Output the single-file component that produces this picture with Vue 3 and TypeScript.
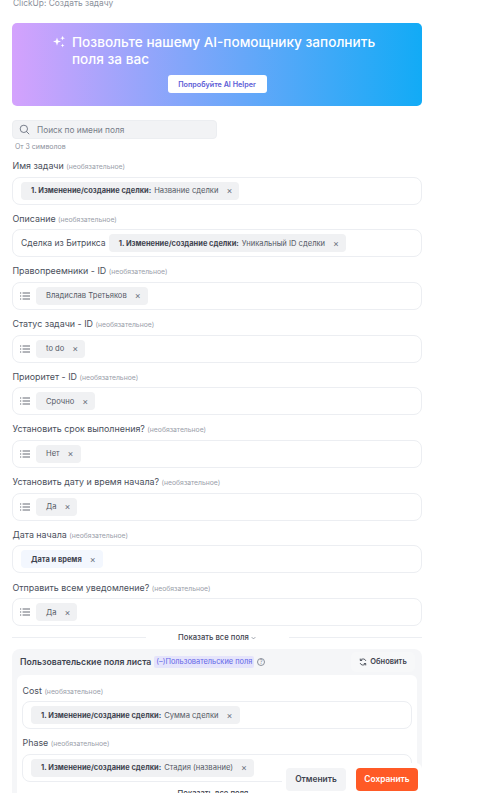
<script setup lang="ts">
interface Chip {
  bold?: string;
  text?: string;
  tone?: string;
}

interface Field {
  label: string;
  list?: boolean;
  prefix?: string;
  chip: Chip;
}

const mainFields: Field[] = [
  { label: "Имя задачи", chip: { bold: "1. Изменение/создание сделки:", text: "Название сделки" } },
  {
    label: "Описание",
    prefix: "Сделка из Битрикса",
    chip: { bold: "1. Изменение/создание сделки:", text: "Уникальный ID сделки" },
  },
  { label: "Правопреемники - ID", list: true, chip: { text: "Владислав Третьяков" } },
  { label: "Статус задачи - ID", list: true, chip: { text: "to do" } },
  { label: "Приоритет - ID", list: true, chip: { text: "Срочно" } },
  { label: "Установить срок выполнения?", list: true, chip: { text: "Нет" } },
  { label: "Установить дату и время начала?", list: true, chip: { text: "Да" } },
  { label: "Дата начала", chip: { bold: "Дата и время", tone: "blue" } },
  { label: "Отправить всем уведомление?", list: true, chip: { text: "Да" } },
];

const customFields: Field[] = [
  { label: "Cost", chip: { bold: "1. Изменение/создание сделки:", text: "Сумма сделки" } },
  { label: "Phase", chip: { bold: "1. Изменение/создание сделки:", text: "Стадия (название)" } },
];
</script>

<template>
  <div class="page">
    <div class="crumb">ClickUp: Создать задачу</div>

    <div class="banner">
      <div class="banner__head">
        <svg class="banner__icon" viewBox="0 0 14 14" width="14" height="14" fill="#fff">
          <path d="M5 2.5 6 5.6 9 6.6 6 7.6 5 10.7 4 7.6 1 6.6 4 5.6Z" />
          <path d="M10.6 0.8 11.2 2.6 13 3.2 11.2 3.8 10.6 5.6 10 3.8 8.2 3.2 10 2.6Z" />
          <path d="M10.6 8.6 11.1 10 12.5 10.5 11.1 11 10.6 12.4 10.1 11 8.7 10.5 10.1 10Z" />
        </svg>
        <div class="banner__title">Позвольте нашему AI-помощнику заполнить поля за вас</div>
      </div>
      <button type="button" class="banner__btn">Попробуйте AI Helper</button>
    </div>

    <div class="search">
      <svg viewBox="0 0 12 12" width="11" height="11" fill="none" stroke="#6b7280" stroke-width="1">
        <circle cx="5.3" cy="5.3" r="4" />
        <path d="M8.2 8.2 10.8 10.8" stroke-linecap="round" />
      </svg>
      <span>Поиск по имени поля</span>
    </div>
    <div class="hint">От 3 символов</div>

    <div class="fields">
      <div v-for="field in mainFields" :key="field.label" class="field">
        <div class="field__label">
          {{ field.label }} <small>(необязательное)</small>
        </div>
        <div class="field__box">
          <svg v-if="field.list" class="field__list" viewBox="0 0 10 8" width="10" height="8" stroke="#3f4450" stroke-width="0.8">
            <path d="M0 1H1.2M0 4H1.2M0 7H1.2M2.6 1H10M2.6 4H10M2.6 7H10" />
          </svg>
          <span v-if="field.prefix" class="field__prefix">{{ field.prefix }}</span>
          <span class="chip" :class="{ 'chip--blue': field.chip.tone == 'blue' }">
            <b v-if="field.chip.bold">{{ field.chip.bold }}</b>
            <span v-if="field.chip.text">{{ field.chip.text }}</span>
            <i>×</i>
          </span>
        </div>
      </div>
    </div>

    <div class="more">
      <span class="more__line"></span>
      <span class="more__text">
        Показать все поля
        <svg viewBox="0 0 8 5" width="5" height="4" fill="none" stroke="#6b7280" stroke-width="1">
          <path d="M1 1 4 4 7 1" />
        </svg>
      </span>
      <span class="more__line"></span>
    </div>

    <div class="panel">
      <div class="panel__head">
        <span class="panel__title">Пользовательские поля листа</span>
        <span class="tag">(–)Пользовательские поля</span>
        <span class="help">?</span>
        <button type="button" class="refresh">
          <svg viewBox="0 0 10 10" width="8" height="8" fill="none" stroke="#3f4450" stroke-width="1.1">
            <path d="M8.6 3.6A3.8 3.8 0 0 0 1.8 3M1.4 6.4A3.8 3.8 0 0 0 8.2 7" />
            <path d="M1.6 0.8V3.1H3.9M8.4 9.2V6.9H6.1" />
          </svg>
          Обновить
        </button>
      </div>
      <div class="panel__body">
        <div v-for="field in customFields" :key="field.label" class="field">
          <div class="field__label">
            {{ field.label }} <small>(необязательное)</small>
          </div>
          <div class="field__box">
            <span class="chip">
              <b>{{ field.chip.bold }}</b>
              <span>{{ field.chip.text }}</span>
              <i>×</i>
            </span>
          </div>
        </div>
        <div class="panel__more">Показать все поля</div>
      </div>
    </div>

    <div class="actions">
      <button type="button" class="actions__cancel">Отменить</button>
      <button type="button" class="actions__save">Сохранить</button>
    </div>
  </div>
</template>

<style>
html,
body {
  margin: 0;
  background: #fff;
  overflow: hidden;
}
</style>

<style scoped>
.page {
  position: relative;
  box-sizing: border-box;
  width: 485px;
  height: 793px;
  overflow: hidden;
  padding: 0 63px 0 12px;
  font-family: Inter, "Noto Sans", sans-serif;
  color: #3f4450;
}

.crumb {
  margin-top: -3px;
  padding-left: 1px;
  height: 12px;
  font-size: 8.4px;
  line-height: 12px;
  color: #8b919c;
}

.banner {
  box-sizing: border-box;
  height: 83px;
  margin-top: 14px;
  padding-top: 11px;
  border-radius: 5px;
  background: linear-gradient(90deg, #d4a2fd 0%, #12abf6 100%);
  display: flex;
  flex-direction: column;
  align-items: center;
}

.banner__head {
  display: flex;
  align-items: flex-start;
  gap: 6px;
  width: 330px;
}

.banner__icon {
  flex: none;
  margin-top: 1px;
}

.banner__title {
  font-size: 13.6px;
  line-height: 17px;
  font-weight: 500;
  color: #fff;
}

.banner__btn {
  margin-top: 7px;
  width: 99px;
  height: 18px;
  padding: 0;
  border: 0;
  border-radius: 3px;
  background: #fff;
  color: #5b5bd6;
  font-family: inherit;
  font-size: 7.2px;
  font-weight: 600;
}

.search {
  box-sizing: border-box;
  width: 205px;
  height: 19px;
  margin-top: 14px;
  padding-left: 6px;
  display: flex;
  align-items: center;
  gap: 7px;
  border: 1px solid #eceef1;
  border-radius: 4px;
  background: #f2f3f5;
  font-size: 8.3px;
  color: #777d88;
}

.hint {
  margin: 3px 0 0 3px;
  height: 10px;
  font-size: 7px;
  line-height: 10px;
  color: #8b919c;
}

.fields {
  margin-top: 5px;
}

.field {
  margin-bottom: 5.2px;
}

.field__label {
  height: 19px;
  padding: 2px 0 0 0.5px;
  box-sizing: border-box;
  font-size: 8.9px;
  line-height: 13px;
  color: #4b505c;
}

.field__label small {
  font-size: 6.8px;
  color: #9aa0aa;
}

.field__box {
  box-sizing: border-box;
  height: 28px;
  margin-top: 0.5px;
  padding: 0 8px;
  display: flex;
  align-items: center;
  gap: 3px;
  border: 1px solid #eceef2;
  border-radius: 8px;
  background: #fff;
}

.field__list {
  flex: none;
  margin: 0 3.5px 0 -1.5px;
}

.field__prefix {
  font-size: 8.6px;
  color: #4b505c;
}

.chip {
  display: inline-flex;
  align-items: center;
  gap: 3px;
  box-sizing: border-box;
  height: 18px;
  padding: 0 7px 0 10px;
  border-radius: 4px;
  background: #f0f1f3;
  font-size: 7.6px;
  white-space: nowrap;
  color: #555a66;
}

.chip b {
  font-size: 7.45px;
  font-weight: 700;
  color: #3f4450;
}

.chip i {
  margin-left: 5px;
  font-style: normal;
  font-size: 9px;
  line-height: 9px;
  color: #6b7280;
}

.chip--blue {
  background: #f3f7fe;
}

.more {
  display: flex;
  align-items: center;
  height: 12px;
  margin-top: 1.8px;
}

.more__line {
  flex: 1;
  height: 1px;
  background: #eceef2;
}

.more__text {
  width: 143px;
  text-align: center;
  font-size: 7.7px;
  font-weight: 500;
}

.panel {
  margin-top: 5.5px;
  height: 200px;
  padding: 0 5px;
  border-radius: 8px 8px 0 0;
  background: #f5f6f8;
}

.panel__head {
  display: flex;
  align-items: center;
  height: 26.5px;
  padding: 0 3px;
}

.panel__title {
  margin-top: 1px;
  font-size: 8.7px;
  font-weight: 600;
}

.tag {
  margin: 1px 0 0 3px;
  padding: 2px;
  border-radius: 2px;
  background: #e5e4fb;
  font-size: 7.4px;
  line-height: 8px;
  color: #6366e8;
}

.help {
  margin: 1px 0 0 3px;
  box-sizing: border-box;
  width: 8px;
  height: 8px;
  border: 0.7px solid #8b919c;
  border-radius: 50%;
  font-size: 5.5px;
  line-height: 7px;
  text-align: center;
  color: #8b919c;
}

.refresh {
  margin-left: auto;
  margin-right: -1px;
  width: 64px;
  height: 20px;
  display: inline-flex;
  align-items: center;
  justify-content: center;
  gap: 3px;
  padding: 0;
  border: 0;
  border-radius: 5px;
  background: #f7f8f9;
  font-family: inherit;
  font-size: 7.5px;
  font-weight: 600;
  color: #3f4450;
}

.panel__body {
  padding: 6.5px 5px 0;
  border-radius: 6px;
  background: #fff;
}

.panel__more {
  margin-top: 7px;
  padding-right: 8px;
  text-align: center;
  font-size: 7.7px;
  font-weight: 500;
}

.actions {
  position: absolute;
  left: 282px;
  top: 763px;
  box-sizing: border-box;
  width: 140px;
  height: 36px;
  padding: 4.5px 4px;
  display: flex;
  justify-content: space-between;
  border-radius: 6px;
  background: #fff;
}

.actions button {
  height: 23.5px;
  padding: 0;
  border: 0;
  border-radius: 4px;
  font-family: inherit;
  font-size: 8.4px;
  font-weight: 600;
}

.actions__cancel {
  width: 60px;
  background: #f3f4f6;
  color: #3f4450;
}

.actions__save {
  width: 62px;
  background: #ff5a26;
  color: #fff;
}
</style>
